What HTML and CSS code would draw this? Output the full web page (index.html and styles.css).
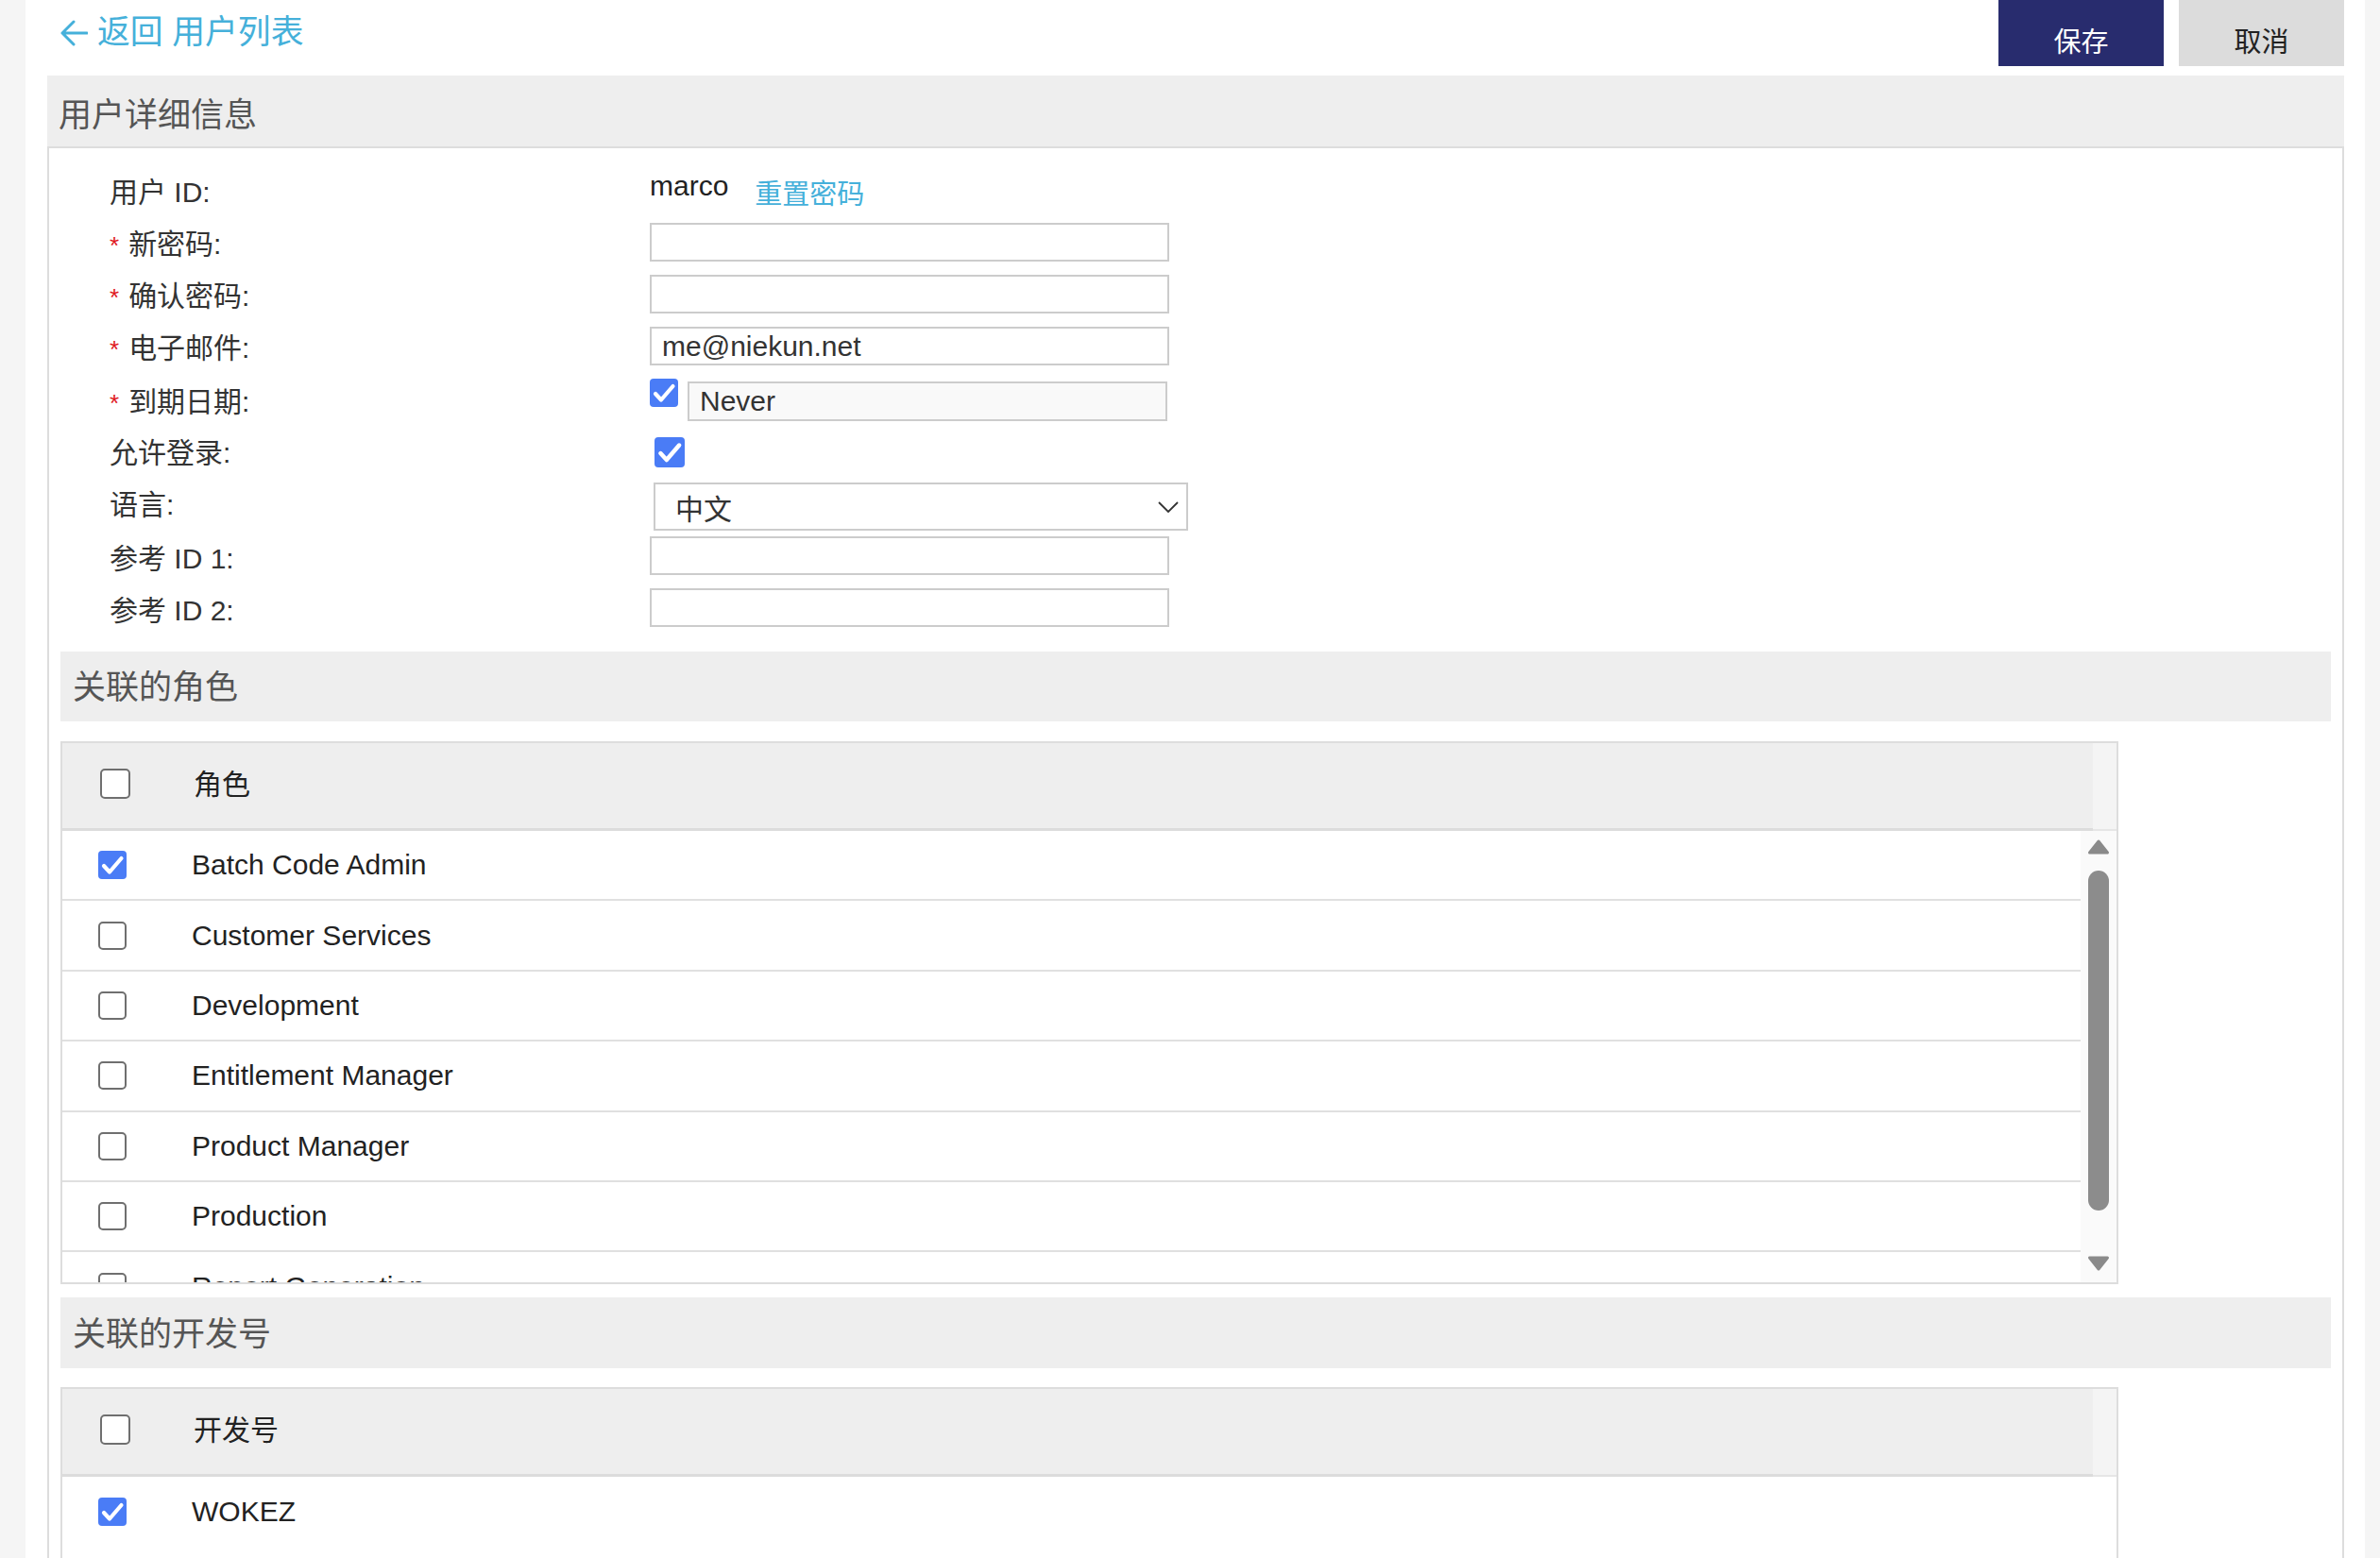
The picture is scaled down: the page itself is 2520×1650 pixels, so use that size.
FILE: index.html
```html
<!DOCTYPE html>
<html lang="zh-CN">
<head>
<meta charset="utf-8">
<title>用户详细信息</title>
<link rel="stylesheet" href="styles.css">
</head>
<body>
<div class="page">
  <div class="topbar">
    <a class="back" href="#">
      <svg class="back-arrow" viewBox="0 0 30 30" width="30" height="30"><path d="M29 15 H3 M15 3 L3 15 L15 27" fill="none" stroke="#45b0da" stroke-width="3" stroke-linecap="round" stroke-linejoin="round"/></svg>
      <span>返回 用户列表</span>
    </a>
    <div class="actions">
      <button class="btn btn-save">保存</button>
      <button class="btn btn-cancel">取消</button>
    </div>
  </div>

  <div class="panel-title">用户详细信息</div>
  <div class="panel-body">
    <div class="form">
      <div class="row row-id">
        <div class="label">用户 ID:</div>
        <div class="value"><span class="uid">marco</span><a class="reset" href="#">重置密码</a></div>
      </div>
      <div class="row">
        <div class="label"><span class="req">*</span>新密码:</div>
        <input class="input" type="password">
      </div>
      <div class="row">
        <div class="label"><span class="req">*</span>确认密码:</div>
        <input class="input" type="password">
      </div>
      <div class="row">
        <div class="label"><span class="req">*</span>电子邮件:</div>
        <input class="input" type="text" value="me@niekun.net">
      </div>
      <div class="row row-expiry">
        <div class="label"><span class="req">*</span>到期日期:</div>
        <div class="value value-expiry">
          <span class="cb cb-checked cb-sm"><svg viewBox="0 0 30 30"><path d="M6 16 L12 22.5 L24.5 8" fill="none" stroke="#fff" stroke-width="4.2" stroke-linecap="round" stroke-linejoin="round"/></svg></span>
          <input class="input input-never" type="text" value="Never">
        </div>
      </div>
      <div class="row row-login">
        <div class="label">允许登录:</div>
        <div class="value">
          <span class="cb cb-checked cb-lg"><svg viewBox="0 0 30 30"><path d="M6 16 L12 22.5 L24.5 8" fill="none" stroke="#fff" stroke-width="4.2" stroke-linecap="round" stroke-linejoin="round"/></svg></span>
        </div>
      </div>
      <div class="row row-lang">
        <div class="label">语言:</div>
        <div class="select"><span>中文</span><svg class="chev" viewBox="0 0 22 12" width="22" height="12"><path d="M1 1 L11 11 L21 1" fill="none" stroke="#333" stroke-width="1.8"/></svg></div>
      </div>
      <div class="row row-ref1">
        <div class="label">参考 ID 1:</div>
        <input class="input" type="text">
      </div>
      <div class="row row-ref2">
        <div class="label">参考 ID 2:</div>
        <input class="input" type="text">
      </div>
    </div>

    <div class="section-bar">关联的角色</div>
    <div class="grid">
      <div class="grid-head">
        <div class="head-main"><span class="cb cb-head"></span><span class="head-text">角色</span></div>
        <div class="head-spacer"></div>
      </div>
      <div class="grid-body grid-body-roles">
        <div class="rows">
          <div class="grow"><span class="cb cb-checked cb-row"><svg viewBox="0 0 30 30"><path d="M6 16 L12 22.5 L24.5 8" fill="none" stroke="#fff" stroke-width="4.2" stroke-linecap="round" stroke-linejoin="round"/></svg></span><span class="gtext">Batch Code Admin</span></div>
          <div class="grow"><span class="cb cb-row"></span><span class="gtext">Customer Services</span></div>
          <div class="grow"><span class="cb cb-row"></span><span class="gtext">Development</span></div>
          <div class="grow"><span class="cb cb-row"></span><span class="gtext">Entitlement Manager</span></div>
          <div class="grow"><span class="cb cb-row"></span><span class="gtext">Product Manager</span></div>
          <div class="grow"><span class="cb cb-row"></span><span class="gtext">Production</span></div>
          <div class="grow"><span class="cb cb-row"></span><span class="gtext">Report Generation</span></div>
          <div class="grow"><span class="cb cb-row"></span><span class="gtext">Support</span></div>
        </div>
        <div class="vscroll">
          <svg class="arrow" viewBox="0 0 24 18" width="24" height="18"><polygon points="12,3 21.5,15 2.5,15" fill="#8a8a8a" stroke="#8a8a8a" stroke-width="3" stroke-linejoin="round"/></svg>
          <div class="thumb"></div>
          <svg class="arrow arrow-down" viewBox="0 0 24 18" width="24" height="18"><polygon points="2.5,3 21.5,3 12,15" fill="#8a8a8a" stroke="#8a8a8a" stroke-width="3" stroke-linejoin="round"/></svg>
        </div>
      </div>
    </div>

    <div class="section-bar section-bar-2">关联的开发号</div>
    <div class="grid grid-dev">
      <div class="grid-head">
        <div class="head-main"><span class="cb cb-head"></span><span class="head-text">开发号</span></div>
        <div class="head-spacer"></div>
      </div>
      <div class="grid-body">
        <div class="rows">
          <div class="grow"><span class="cb cb-checked cb-row"><svg viewBox="0 0 30 30"><path d="M6 16 L12 22.5 L24.5 8" fill="none" stroke="#fff" stroke-width="4.2" stroke-linecap="round" stroke-linejoin="round"/></svg></span><span class="gtext">WOKEZ</span></div>
        </div>
      </div>
    </div>
  </div>
</div>
</body>
</html>
```

FILE: styles.css
```css
* { box-sizing: border-box; }

html, body {
  margin: 0;
  height: 1650px;
  overflow: hidden;
}

body {
  background: #f5f5f5;
  font-family: "Liberation Sans", "Noto Sans CJK SC", sans-serif;
  color: #222;
}

.page {
  margin: 0 16px 0 27px;
  background: #fff;
  padding: 0 22px 0 23px;
  height: 1650px;
  overflow: hidden;
}

/* top bar */
.topbar {
  display: flex;
  justify-content: space-between;
  align-items: flex-start;
  height: 80px;
}

.back {
  display: flex;
  align-items: center;
  gap: 10px;
  margin: 16px 0 0 13px;
  color: #45b0da;
  text-decoration: none;
  font-size: 34.8px;
  line-height: 35px;
}

.back-arrow {
  display: block;
  margin-top: 3px;
}

.actions {
  display: flex;
  gap: 16px;
}

.btn {
  width: 175px;
  height: 70px;
  border: 0;
  padding: 20px 0 0;
  font-family: "Liberation Sans", "Noto Sans CJK SC", sans-serif;
  font-size: 29px;
  line-height: 34px;
  cursor: pointer;
}

.btn-save {
  background: #282c6e;
  color: #fff;
}

.btn-cancel {
  background: #dcdcdc;
  color: #222;
}

/* panel */
.panel-title {
  height: 75px;
  background: #eeeeee;
  color: #555;
  font-size: 35px;
  padding: 2px 0 0 12px;
  display: flex;
  align-items: center;
}

.panel-body {
  border: 2px solid #dddddd;
  border-bottom: 0;
  padding: 0 12px;
  height: 1500px;
}

/* form */
.form {
  padding: 16px 0 26px 52px;
}

.row {
  display: flex;
  align-items: center;
  padding: 7px 0;
}

.label {
  width: 572px;
  flex: none;
  font-size: 30px;
  line-height: 34px;
  padding-top: 6px;
  color: #333;
}

.req {
  color: #e0181e;
  font-size: 26px;
  margin-right: 10px;
  font-family: "Liberation Sans", sans-serif;
}

.value {
  display: flex;
  align-items: center;
}

.row-id .value {
  min-height: 41px;
}

.uid {
  font-size: 30px;
  color: #222;
  position: relative;
  top: -4px;
}

.reset {
  margin-left: 28px;
  font-size: 29px;
  color: #45b0da;
  text-decoration: none;
  position: relative;
  top: 2px;
}

.input {
  width: 550px;
  height: 41px;
  border: 2px solid #cccccc;
  border-radius: 0;
  padding: 0 11px;
  font-family: "Liberation Sans", "Noto Sans CJK SC", sans-serif;
  font-size: 30px;
  color: #333;
  background: #fff;
  outline: none;
}

.row-expiry {
  align-items: flex-start;
}

.row-expiry .label {
  align-self: center;
}

.value-expiry {
  align-items: flex-start;
}

.input-never {
  width: 508px;
  height: 42px;
  margin: 3px 0 0 10px;
  background: #f9f9f9;
}

.row-login {
  padding: 8px 0;
}

.row-login .label {
  padding-top: 2px;
}

.row-lang {
  padding: 6px 0 3px;
}

.row-lang .label {
  padding: 0 0 4px;
}

.row-ref1 {
  padding: 3px 0 6px;
}

.row-ref2 {
  padding: 8px 0 0;
}

.select {
  width: 566px;
  height: 51px;
  margin-left: 4px;
  border: 2px solid #cccccc;
  display: flex;
  align-items: center;
  justify-content: space-between;
  padding: 0 8px 0 21px;
  font-size: 30px;
  color: #333;
}

.chev {
  display: block;
}

/* checkboxes */
.cb {
  display: inline-block;
  flex: none;
  width: 30px;
  height: 30px;
  border: 2px solid #6f6f6f;
  border-radius: 5px;
  background: #fff;
}

.cb svg {
  display: block;
  width: 100%;
  height: 100%;
}

.cb-checked {
  border: 0;
  background: #4a7cf6;
  border-radius: 4px;
}

.cb-lg {
  width: 32px;
  height: 32px;
  margin-left: 5px;
}

.cb-head {
  width: 32px;
  height: 32px;
}

/* section bars */
.section-bar {
  height: 74px;
  background: #eeeeee;
  color: #555;
  font-size: 35px;
  padding: 0 0 5px 13px;
  display: flex;
  align-items: center;
}

.section-bar-2 {
  margin-top: 14px;
  height: 75px;
}

/* grids */
.grid {
  width: 2179px;
  margin-top: 21px;
  border: 2px solid #dddddd;
}

.grid-dev {
  margin-top: 20px;
  height: 400px;
}

.grid-head {
  display: flex;
  height: 93px;
}

.head-main {
  flex: 1;
  background: #eeeeee;
  border-bottom: 3px solid #dcdcdc;
  display: flex;
  align-items: center;
  padding: 0 0 5px 40px;
}

.head-text {
  margin-left: 67px;
  font-size: 30px;
  color: #222;
  position: relative;
  top: -2px;
}

.head-spacer {
  width: 25px;
  background: #f4f4f4;
  border-bottom: 2px solid #e6e6e6;
}

.grid-body {
  display: flex;
}

.grid-body-roles {
  height: 478px;
  overflow: hidden;
}

.rows {
  flex: 1;
  overflow: hidden;
}

.grow {
  height: 74.4px;
  border-bottom: 2px solid #e0e0e0;
  display: flex;
  align-items: center;
  padding-left: 38px;
}

.grow:last-child {
  border-bottom: 0;
}

.gtext {
  margin-left: 69px;
  font-size: 30px;
  color: #222;
}

.vscroll {
  width: 38px;
  flex: none;
  background: #fafafa;
  display: flex;
  flex-direction: column;
  align-items: center;
  padding: 8px 0 11px;
}

.arrow {
  display: block;
}

.thumb {
  width: 22px;
  height: 360px;
  margin-top: 16px;
  background: #8c8c8c;
  border-radius: 11px;
}

.arrow-down {
  margin-top: auto;
}
```
